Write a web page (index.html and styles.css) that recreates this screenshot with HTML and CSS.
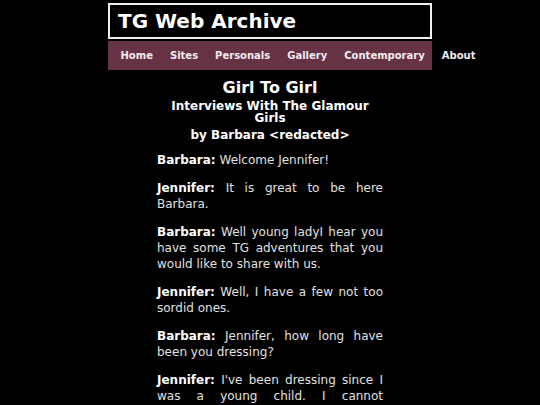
FILE: index.html
```html
<!DOCTYPE html>
<html lang="en">
<head>
<meta charset="utf-8">
<title>TG Web Archive - Girl To Girl</title>
<link rel="stylesheet" href="styles.css">
</head>
<body>
<div class="site">
  <header class="masthead">
    <h1 class="masthead-title">TG Web Archive</h1>
  </header>
  <nav class="nav">
    <a class="nav-link" href="#">Home</a>
    <a class="nav-link" href="#">Sites</a>
    <a class="nav-link" href="#">Personals</a>
    <a class="nav-link" href="#">Gallery</a>
    <a class="nav-link" href="#">Contemporary</a>
    <a class="nav-link" href="#">About</a>
  </nav>
</div>
<main class="article">
  <h2 class="article-title">Girl To Girl</h2>
  <h3 class="article-subtitle">Interviews With The Glamour Girls</h3>
  <h4 class="article-byline">by Barbara &lt;redacted&gt;</h4>
  <p class="line"><b class="speaker">Barbara:</b> Welcome Jennifer!</p>
  <p class="line"><b class="speaker">Jennifer:</b> It is great to be here Barbara.</p>
  <p class="line"><b class="speaker">Barbara:</b> Well young ladyI hear you have some TG adventures that you would like to share with us.</p>
  <p class="line"><b class="speaker">Jennifer:</b> Well, I have a few not too sordid ones.</p>
  <p class="line"><b class="speaker">Barbara:</b> Jennifer, how long have been you dressing?</p>
  <p class="line"><b class="speaker">Jennifer:</b> I've been dressing since I was a young child. I cannot remember a time when I did not want to wear pretty things and be one of the girls.</p>
</main>
</body>
</html>
```

FILE: styles.css
```css
html, body {
  margin: 0;
  padding: 0;
  background: #000;
}

body {
  color: #e0e0e0;
  font-family: "DejaVu Sans", Verdana, sans-serif;
  font-size: 12px;
}

.site {
  width: 324px;
  margin: 3px auto 0;
}

.masthead {
  border: 2px solid #f0f0f0;
  height: 32px;
  display: flex;
  align-items: center;
  padding: 0 8px;
  margin-bottom: 2px;
}

.masthead-title {
  margin: 0;
  color: #fff;
  font-size: 20px;
  font-weight: bold;
  line-height: 1;
}

.nav {
  background: #663344;
  height: 29px;
  display: flex;
  align-items: center;
  padding-left: 4px;
  white-space: nowrap;
}

.nav-link {
  color: #f2eaee;
  text-decoration: none;
  font-size: 10px;
  font-weight: bold;
  padding: 0 8.5px;
  flex: none;
}

.article {
  width: 226px;
  margin: 8px auto 0;
}

.article-title {
  margin: 0;
  text-align: center;
  color: #fff;
  font-size: 16px;
  line-height: 19px;
}

.article-subtitle {
  margin: 3px 0 0;
  text-align: center;
  color: #fff;
  font-size: 12px;
  line-height: 12px;
}

.article-byline {
  margin: 4px 0 0;
  text-align: center;
  color: #fff;
  font-size: 12px;
  line-height: 14px;
}

.line {
  margin: 10px 0 12px;
  line-height: 16px;
  text-align: justify;
}

.line + .line {
  margin-top: 0;
}

.speaker {
  color: #fff;
}
```
